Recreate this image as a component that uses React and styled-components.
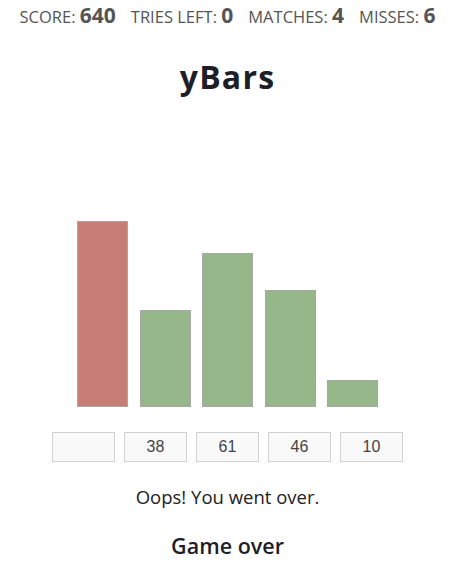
import React from 'react'
import styled, { createGlobalStyle } from 'styled-components'

const GlobalStyle = createGlobalStyle`
  body {
    margin: 0;
    background: #fff;
    font-family: "Open Sans", "Noto Sans", sans-serif;
    color: #222;
  }
`

const Page = styled.div`
  display: flex;
  flex-direction: column;
  align-items: center;
  width: 455px;
`

const ScoreBoard = styled.div`
  display: flex;
  align-items: baseline;
  gap: 15px;
  margin-top: 1px;
  height: 28px;
  color: #555;
`

const Stat = styled.div`
  font-size: 16.5px;
`

const StatValue = styled.span`
  font-size: 21px;
  font-weight: 700;
`

const Title = styled.h1`
  margin: 28px 0 0;
  font-size: 32px;
  font-weight: 700;
  letter-spacing: 1.2px;
  line-height: 40px;
  color: #1e1e28;
`

const Chart = styled.div`
  display: flex;
  align-items: flex-end;
  gap: 11.5px;
  height: 260px;
  margin-top: 50px;
`

const Bar = styled.div`
  width: 49px;
  border: 1px solid #a7a7a7;
  background: ${(props) => (props.over ? '#c77e76' : '#96b78a')};
`

const Guesses = styled.div`
  display: flex;
  gap: 9px;
  margin-top: 25px;
`

const Guess = styled.div`
  box-sizing: border-box;
  width: 63px;
  height: 30px;
  border: 1px solid #d2d2d2;
  background: #f9f9f9;
  display: flex;
  align-items: center;
  justify-content: center;
  font-family: "Liberation Sans", Arial, sans-serif;
  font-size: 16px;
  color: #444;
`

const Message = styled.p`
  margin: 22px 0 0;
  font-size: 18.5px;
  color: #222;
`

const GameOver = styled.h3`
  margin: 22px 0 0;
  font-size: 21.5px;
  font-weight: 600;
  color: #1e1e28;
`

const stats = [
  ['SCORE', 640],
  ['TRIES LEFT', 0],
  ['MATCHES', 4],
  ['MISSES', 6],
]

const bars = [
  { value: 73.5, guess: '', over: true },
  { value: 38, guess: '38' },
  { value: 61, guess: '61' },
  { value: 46, guess: '46' },
  { value: 10, guess: '10' },
]

const App = () => {
  return (
    <>
      <GlobalStyle />
      <Page>
        <ScoreBoard>
          {stats.map(([label, value]) => (
            <Stat key={label}>
              {label}: <StatValue>{value}</StatValue>
            </Stat>
          ))}
        </ScoreBoard>
        <Title>yBars</Title>
        <Chart>
          {bars.map((b, i) => (
            <Bar key={i} over={b.over} style={{ height: b.value * 2.5 }} />
          ))}
        </Chart>
        <Guesses>
          {bars.map((b, i) => (
            <Guess key={i}>{b.guess}</Guess>
          ))}
        </Guesses>
        <Message>Oops! You went over.</Message>
        <GameOver>Game over</GameOver>
      </Page>
    </>
  )
}

export default App
